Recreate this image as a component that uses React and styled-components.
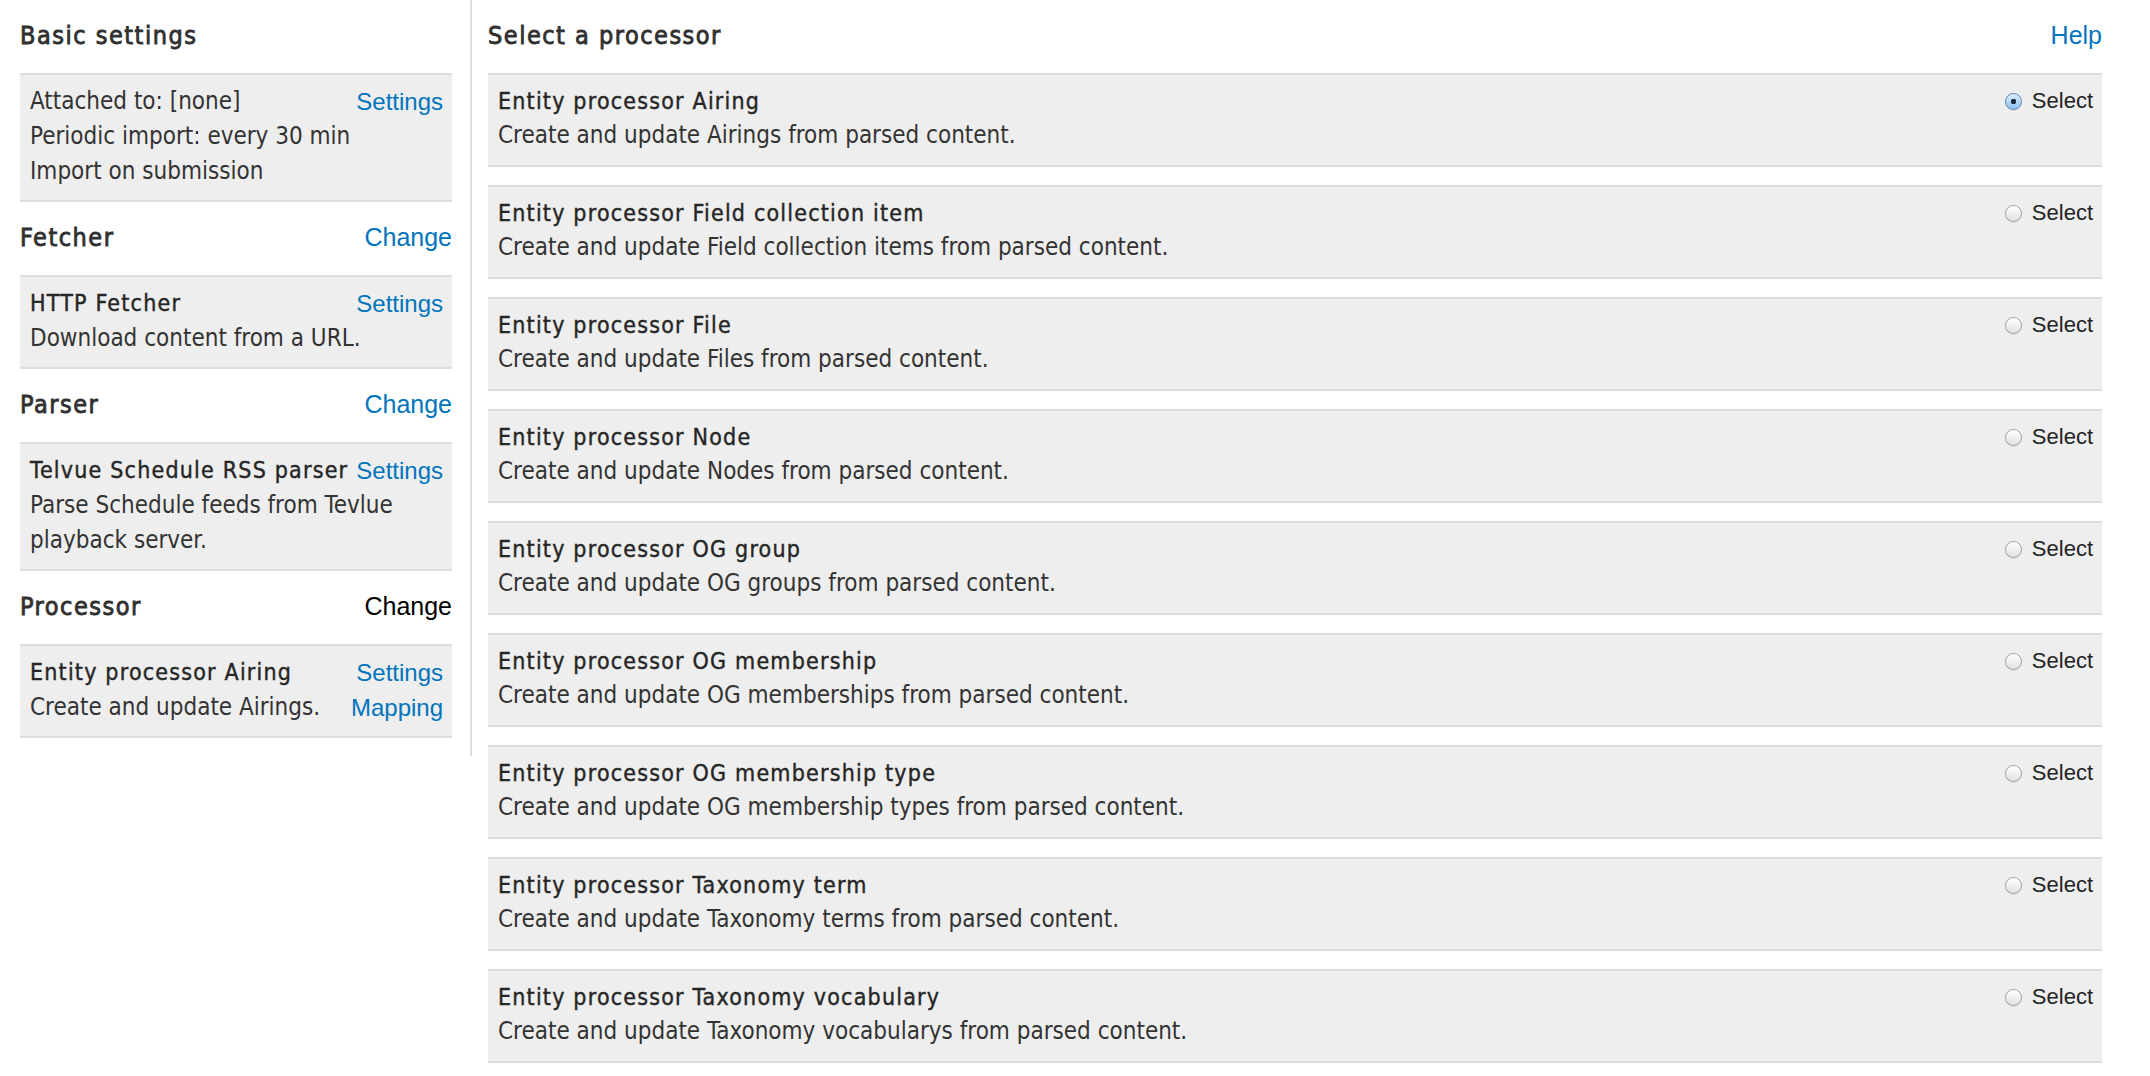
import React from "react";
import styled, { createGlobalStyle } from "styled-components";

const GlobalStyle = createGlobalStyle`
  html, body {
    margin: 0;
    padding: 0;
    background: #ffffff;
  }
  body {
    font-family: "DejaVu Sans Condensed", "DejaVu Sans", sans-serif;
    font-stretch: condensed;
    color: #333333;
  }
`;

const Page = styled.div`
  display: flex;
  align-items: flex-start;
  padding: 0 48px 0 20px;
`;

const Sidebar = styled.aside`
  flex: none;
  width: 432px;
  padding: 0 18px 18px 0;
  border-right: 2px solid #dddddd;
`;

const Main = styled.main`
  flex: 1;
  margin-left: 16px;
`;

const Section = styled.section`
  margin-top: 21px;
`;

const Header = styled.div`
  display: flex;
  justify-content: space-between;
  align-items: baseline;
  margin-bottom: 22px;
`;

const Heading = styled.h2`
  margin: 0;
  font-family: "DejaVu Sans Condensed", "DejaVu Sans", sans-serif;
  font-stretch: condensed;
  font-size: 25px;
  line-height: 30px;
  font-weight: normal;
  letter-spacing: 1.5px;
  color: #303030;
  -webkit-text-stroke: 0.8px #303030;
`;

const Link = styled.a`
  font-family: "Liberation Sans", Arial, sans-serif;
  font-stretch: normal;
  font-size: ${(p) => (p.$large ? "25px" : "24px")};
  color: ${(p) => (p.$plain ? "#000000" : "#0074bd")};
  text-decoration: none;
  cursor: pointer;
`;

const Box = styled.div`
  display: flow-root;
  background: #eeeeee;
  border-top: 2px solid #dddddd;
  border-bottom: 2px solid #dddddd;
  padding: 9px 9px 11px 10px;
  font-size: 24px;
  line-height: 35px;
`;

const LinkStack = styled.div`
  float: right;
  display: flex;
  flex-direction: column;
  align-items: flex-end;
  line-height: 35px;
`;

const Title = styled.div`
  font-size: 23px;
  letter-spacing: 1.2px;
  color: #262626;
  -webkit-text-stroke: 0.4px #262626;
`;

const Line = styled.div``;

const ItemList = styled.div`
  display: flex;
  flex-direction: column;
  gap: 18px;
`;

const Item = styled.div`
  display: flow-root;
  background: #eeeeee;
  border-top: 2px solid #dddddd;
  border-bottom: 2px solid #dddddd;
  padding: 9px 9px 13px 10px;
  font-size: 24px;
  line-height: 34px;
`;

const Choice = styled.label`
  float: right;
  display: flex;
  align-items: center;
  gap: 10px;
  height: 34px;
  font-family: "Liberation Sans", Arial, sans-serif;
  font-stretch: normal;
  font-size: 22px;
  color: #222222;
`;

const Radio = styled.input.attrs({ type: "radio" })`
  appearance: none;
  -webkit-appearance: none;
  margin: 0;
  width: 17px;
  height: 17px;
  border-radius: 50%;
  border: 1px solid #a0a0a0;
  background: linear-gradient(#ffffff, #e2e2e2);
  box-shadow: 0 1px 1px rgba(0, 0, 0, 0.08);
  &:checked {
    border-color: #5f86b8;
    background:
      radial-gradient(circle, #1b2a3c 0 2.5px, transparent 3px),
      linear-gradient(#d9ebfc, #8ec2f2);
  }
`;

const processors = [
  ["Airing", "Airings", true],
  ["Field collection item", "Field collection items"],
  ["File", "Files"],
  ["Node", "Nodes"],
  ["OG group", "OG groups"],
  ["OG membership", "OG memberships"],
  ["OG membership type", "OG membership types"],
  ["Taxonomy term", "Taxonomy terms"],
  ["Taxonomy vocabulary", "Taxonomy vocabularys"],
];

export default function App() {
  return (
    <>
      <GlobalStyle />
      <Page>
        <Sidebar>
          <Section>
            <Header>
              <Heading>Basic settings</Heading>
            </Header>
            <Box>
              <LinkStack>
                <Link>Settings</Link>
              </LinkStack>
              <Line>Attached to: [none]</Line>
              <Line>Periodic import: every 30 min</Line>
              <Line>Import on submission</Line>
            </Box>
          </Section>
          <Section>
            <Header>
              <Heading>Fetcher</Heading>
              <Link $large>Change</Link>
            </Header>
            <Box>
              <LinkStack>
                <Link>Settings</Link>
              </LinkStack>
              <Title>HTTP Fetcher</Title>
              <Line>Download content from a URL.</Line>
            </Box>
          </Section>
          <Section>
            <Header>
              <Heading>Parser</Heading>
              <Link $large>Change</Link>
            </Header>
            <Box>
              <LinkStack>
                <Link>Settings</Link>
              </LinkStack>
              <Title>Telvue Schedule RSS parser</Title>
              <Line>Parse Schedule feeds from Tevlue playback server.</Line>
            </Box>
          </Section>
          <Section>
            <Header>
              <Heading>Processor</Heading>
              <Link $large $plain>Change</Link>
            </Header>
            <Box>
              <LinkStack>
                <Link>Settings</Link>
                <Link>Mapping</Link>
              </LinkStack>
              <Title>Entity processor Airing</Title>
              <Line>Create and update Airings.</Line>
            </Box>
          </Section>
        </Sidebar>
        <Main>
          <Section>
            <Header>
              <Heading>Select a processor</Heading>
              <Link $large>Help</Link>
            </Header>
            <ItemList>
              {processors.map(([name, plural, checked]) => (
                <Item key={name}>
                  <Choice>
                    <Radio name="processor" defaultChecked={!!checked} />
                    Select
                  </Choice>
                  <Title>Entity processor {name}</Title>
                  <Line>Create and update {plural} from parsed content.</Line>
                </Item>
              ))}
            </ItemList>
          </Section>
        </Main>
      </Page>
    </>
  );
}
